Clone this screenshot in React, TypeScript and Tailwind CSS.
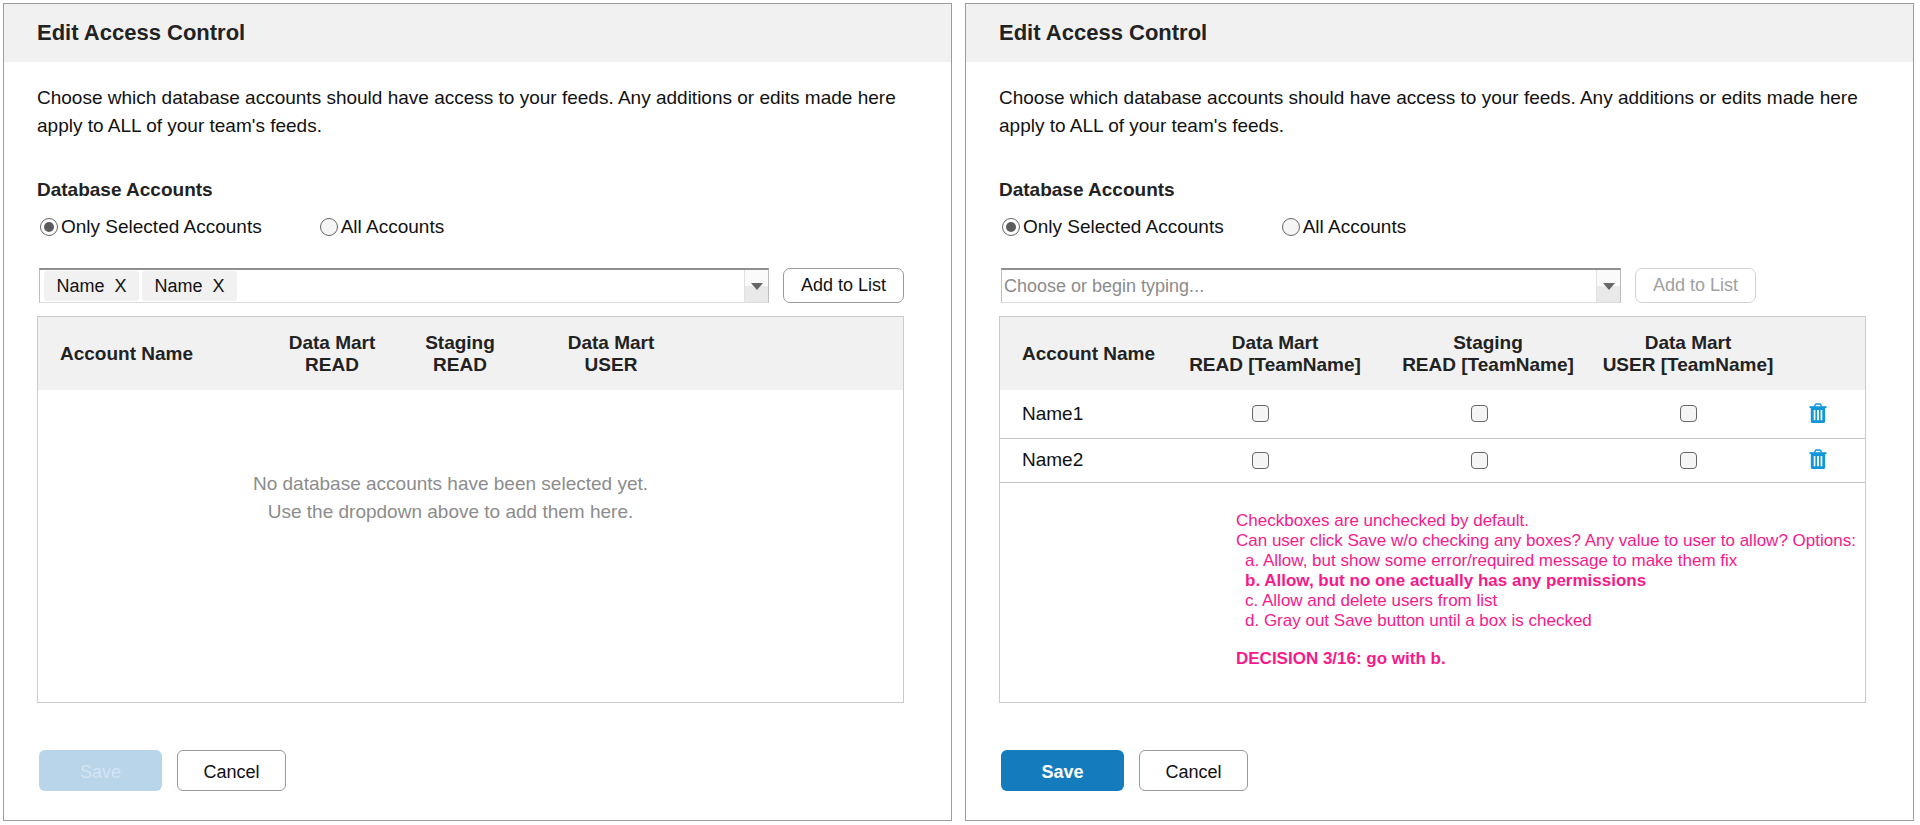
import { useState } from "react";
import type { ReactNode } from "react";
import clsx from "clsx";

const selectedNames = ["Name", "Name"];
const accounts = ["Name1", "Name2"];

function TrashIcon() {
  return (
    <svg width="18" height="20" viewBox="0 0 18 20" fill="none" aria-hidden="true">
      <path d="M5.500 3.500 6.300 1.800c.2-.5.6-.8 1.200-.8h3c.6 0 1 .3 1.200.8l.8 1.700" stroke="#1296db" strokeWidth="1.500" />
      <path d="M.5 3.200h17v1.800h-17z" fill="#1296db" />
      <path
        fillRule="evenodd"
        clipRule="evenodd"
        d="M1.800 5h14.400v13.200c0 1-.7 1.700-1.600 1.700H3.400c-.9 0-1.600-.7-1.600-1.700V5zm2.900 2v10.200h1.700V7H4.700zm3.400 0v10.200h1.800V7H8.100zm3.500 0v10.200h1.700V7h-1.700z"
        fill="#1296db"
      />
    </svg>
  );
}

function ArrowButton() {
  return (
    <button
      type="button"
      aria-label="Show accounts"
      className="flex w-6 shrink-0 items-center justify-center self-stretch border-l border-[#e2e2e2] bg-linear-to-b from-[#fafafa] from-50% to-[#e9e9e9] to-50%"
    >
      <svg width="12" height="7" viewBox="0 0 12 7" aria-hidden="true">
        <path d="M0 0h12L6 7z" fill="#666" />
      </svg>
    </button>
  );
}

function AccountRadios({ group }: { group: string }) {
  const [value, setValue] = useState("selected");
  const options = [
    { id: "selected", label: "Only Selected Accounts" },
    { id: "all", label: "All Accounts" },
  ];

  return (
    <div className="flex gap-[58px] pl-[3px] leading-7">
      {options.map((option) => (
        <label key={option.id} className="flex items-center gap-[3px]">
          <input
            type="radio"
            name={group}
            checked={value === option.id}
            onChange={() => setValue(option.id)}
            className="grid size-[18px] appearance-none place-content-center rounded-full border border-[#666] bg-[#f5f5f5] before:size-2.5 before:rounded-full checked:bg-white checked:before:bg-[#5c5c5c]"
          />
          {option.label}
        </label>
      ))}
    </div>
  );
}

function AddButton({ disabled }: { disabled?: boolean }) {
  return (
    <button
      type="button"
      disabled={disabled}
      className={clsx(
        "h-[35px] w-[121px] shrink-0 rounded-[7px] border bg-white text-[18px]",
        disabled ? "border-[#d2d2d2] text-[#a0a0a0]" : "border-[#999] text-[#111]",
      )}
    >
      Add to List
    </button>
  );
}

function Combo({ children }: { children: ReactNode }) {
  return (
    <div className="flex h-[35px] flex-1 items-center border border-t-2 border-[#bdbdbd] border-t-[#8f8f8f] border-b-[#dcdcdc] bg-white text-[18px]">
      {children}
      <ArrowButton />
    </div>
  );
}

function Panel({ group, picker, list, canSave }: { group: string; picker: ReactNode; list: ReactNode; canSave?: boolean }) {
  return (
    <section className="min-w-0 flex-1 border border-[#9c9c9c] bg-white">
      <header className="bg-[#f1f1f1] px-[33px] pt-[15px] pb-4">
        <h1 className="text-[22px] leading-[27px] font-bold text-[#222]">Edit Access Control</h1>
      </header>
      <div className="px-[33px] pt-[22px] pb-[29px]">
        <p className="leading-7">
          Choose which database accounts should have access to your feeds. Any additions or edits made here apply to ALL
          of your team's feeds.
        </p>
        <h2 className="mt-9 mb-[9px] leading-7 font-bold text-[#222]">Database Accounts</h2>
        <AccountRadios group={group} />
        <div className="pr-3.5">
          <div className="mt-[27px] flex gap-3.5 pl-0.5">{picker}</div>
          <div className="mt-[13px] min-h-[387px] border border-[#cbcbcb]">{list}</div>
        </div>
        <div className="mt-[47px] flex gap-[15px] pl-0.5 text-[18px]">
          <button
            type="button"
            disabled={!canSave}
            className={clsx(
              "h-[41px] w-[123px] rounded-md pt-1",
              canSave ? "bg-[#147bbd] font-bold text-white" : "bg-[#b9d5ea] text-[#d3e4f1]",
            )}
          >
            Save
          </button>
          <button type="button" className="h-[41px] w-[109px] rounded-md border border-[#999] bg-white pt-1">
            Cancel
          </button>
        </div>
      </div>
    </section>
  );
}

function EmptyList() {
  return (
    <>
      <table className="w-full table-fixed">
        <colgroup>
          <col />
          <col className="w-32" />
          <col className="w-32" />
          <col className="w-[174px]" />
          <col className="w-[205px]" />
        </colgroup>
        <thead>
          <tr className="h-[73px] bg-[#f1f1f1] leading-[22px] text-[#222]">
            <th className="pl-[22px] text-left">Account Name</th>
            <th>Data Mart<br />READ</th>
            <th>Staging<br />READ</th>
            <th>Data Mart<br />USER</th>
            <td />
          </tr>
        </thead>
      </table>
      <p className="pt-20 pr-10 text-center leading-7 text-[#8c8c8c]">
        No database accounts have been selected yet.
        <br />
        Use the dropdown above to add them here.
      </p>
    </>
  );
}

function Tick({ label }: { label: string }) {
  return (
    <input
      type="checkbox"
      aria-label={label}
      className="mx-auto block size-[17px] appearance-none rounded-[4px] border border-[#666] bg-[#f5f5f5] checked:bg-[#147bbd]"
    />
  );
}

function AccountList() {
  return (
    <>
      <table className="w-full table-fixed">
        <colgroup>
          <col />
          <col className="w-[200px]" />
          <col className="w-[226px]" />
          <col className="w-[174px]" />
          <col className="w-[90px]" />
        </colgroup>
        <thead>
          <tr className="h-[73px] bg-[#f1f1f1] leading-[22px] whitespace-nowrap text-[#222]">
            <th className="pl-[22px] text-left">Account Name</th>
            <th>Data Mart<br />READ [TeamName]</th>
            <th>Staging<br />READ [TeamName]</th>
            <th>Data Mart<br />USER [TeamName]</th>
            <td />
          </tr>
        </thead>
        <tbody>
          {accounts.map((name) => (
            <tr key={name} className="h-11 border-b border-[#c4c4c4] first:h-12">
              <td className="pl-[22px]">{name}</td>
              <td className="pr-[30px]"><Tick label={`${name} Data Mart READ`} /></td>
              <td className="pr-[18px]"><Tick label={`${name} Staging READ`} /></td>
              <td><Tick label={`${name} Data Mart USER`} /></td>
              <td className="pr-1 pb-0.5">
                <button type="button" aria-label={`Remove ${name}`} className="mx-auto block">
                  <TrashIcon />
                </button>
              </td>
            </tr>
          ))}
        </tbody>
      </table>
      {/* review notes */}
      <div className="pt-7 pl-[236px] text-[17px] leading-5 whitespace-nowrap text-[#f8198b]">
        <p>Checkboxes are unchecked by default.</p>
        <p>Can user click Save w/o checking any boxes? Any value to user to allow? Options:</p>
        <ul className="pl-[9px]">
          <li>a. Allow, but show some error/required message to make them fix</li>
          <li className="font-bold">b. Allow, but no one actually has any permissions</li>
          <li>c. Allow and delete users from list</li>
          <li>d. Gray out Save button until a box is checked</li>
        </ul>
        <p className="mt-[18px] font-bold">DECISION 3/16: go with b.</p>
      </div>
    </>
  );
}

export default function App() {
  return (
    <main className="flex gap-[13px] bg-white py-[3px] pr-[6px] pl-[3px] font-['Liberation_Sans',Arial,sans-serif] text-[19px] text-[#111]">
      <Panel
        group="accounts-empty"
        picker={
          <>
            <Combo>
              <div className="flex flex-1 gap-[3px] pl-1">
                {selectedNames.map((name, i) => (
                  <span key={i} className="flex h-[30px] w-[95px] items-center justify-center gap-2.5 rounded-[3px] bg-[#f1f1f1]">
                    {name}
                    <button type="button" aria-label={`Remove ${name}`}>X</button>
                  </span>
                ))}
              </div>
            </Combo>
            <AddButton />
          </>
        }
        list={<EmptyList />}
      />
      <Panel
        group="accounts-filled"
        canSave
        picker={
          <>
            <Combo>
              <input
                type="text"
                aria-label="Database account"
                placeholder="Choose or begin typing..."
                className="min-w-0 flex-1 pl-0.5 outline-none placeholder:text-[#8c8c8c]"
              />
            </Combo>
            <AddButton disabled />
            <div className="w-24 shrink-0" />
          </>
        }
        list={<AccountList />}
      />
    </main>
  );
}
